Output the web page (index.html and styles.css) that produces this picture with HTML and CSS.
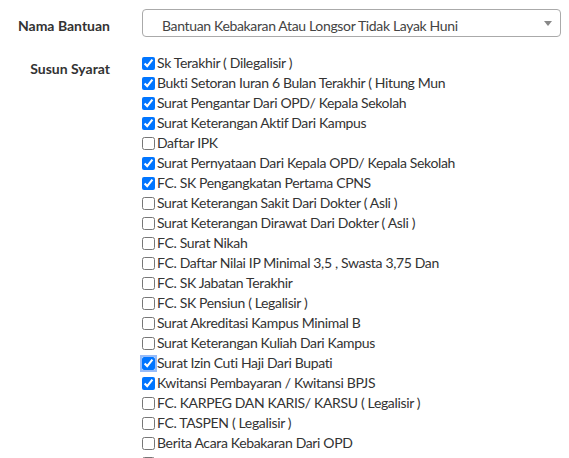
FILE: index.html
```html
<!DOCTYPE html>
<html lang="id">
<head>
<meta charset="utf-8">
<link rel="stylesheet" href="styles.css">
</head>
<body>
<form class="form">
  <div class="row row-select">
    <label class="label">Nama Bantuan</label>
    <div class="select">
      <span class="select-text">Bantuan Kebakaran Atau Longsor Tidak Layak Huni</span>
      <span class="select-arrow"></span>
    </div>
  </div>
  <div class="row row-checks">
    <label class="label label-checks">Susun Syarat</label>
    <div class="checks">
      <label class="check"><input type="checkbox" checked>Sk Terakhir ( Dilegalisir )</label>
      <label class="check"><input type="checkbox" checked>Bukti Setoran Iuran 6 Bulan Terakhir ( Hitung Mun</label>
      <label class="check"><input type="checkbox" checked>Surat Pengantar Dari OPD/ Kepala Sekolah</label>
      <label class="check"><input type="checkbox" checked>Surat Keterangan Aktif Dari Kampus</label>
      <label class="check"><input type="checkbox">Daftar IPK</label>
      <label class="check"><input type="checkbox" checked>Surat Pernyataan Dari Kepala OPD/ Kepala Sekolah</label>
      <label class="check"><input type="checkbox" checked>FC. SK Pengangkatan Pertama CPNS</label>
      <label class="check"><input type="checkbox">Surat Keterangan Sakit Dari Dokter ( Asli )</label>
      <label class="check"><input type="checkbox">Surat Keterangan Dirawat Dari Dokter ( Asli )</label>
      <label class="check"><input type="checkbox">FC. Surat Nikah</label>
      <label class="check"><input type="checkbox">FC. Daftar Nilai IP Minimal 3,5 , Swasta 3,75 Dan</label>
      <label class="check"><input type="checkbox">FC. SK Jabatan Terakhir</label>
      <label class="check"><input type="checkbox">FC. SK Pensiun ( Legalisir )</label>
      <label class="check"><input type="checkbox">Surat Akreditasi Kampus Minimal B</label>
      <label class="check"><input type="checkbox">Surat Keterangan Kuliah Dari Kampus</label>
      <label class="check"><input type="checkbox" class="focused" checked>Surat Izin Cuti Haji Dari Bupati</label>
      <label class="check"><input type="checkbox" checked>Kwitansi Pembayaran / Kwitansi BPJS</label>
      <label class="check"><input type="checkbox">FC. KARPEG DAN KARIS/ KARSU ( Legalisir )</label>
      <label class="check"><input type="checkbox">FC. TASPEN ( Legalisir )</label>
      <label class="check"><input type="checkbox">Berita Acara Kebakaran Dari OPD</label>
      <label class="check"><input type="checkbox">Laporan Kejadian Dari Lurah Setempat</label>
    </div>
  </div>
</form>
</body>
</html>
```

FILE: styles.css
```css
html, body {
  margin: 0;
  padding: 0;
  background: #fff;
}
body {
  font-family: "Lato", "Open Sans", sans-serif;
  font-size: 14px;
  letter-spacing: -0.35px;
  color: #333;
  overflow: hidden;
  height: 458px;
}
.form {
  padding: 9px 8px 0 0;
}
.row {
  display: grid;
  grid-template-columns: 110px 1fr;
  column-gap: 32px;
}
.row-checks {
  margin-top: 16px;
}
.label {
  text-align: right;
  font-weight: 700;
  letter-spacing: 0;
  color: #333;
  padding-top: 7px;
  line-height: 20px;
}
.label-checks {
  padding-top: 6px;
}
.select {
  position: relative;
  height: 28px;
  box-sizing: border-box;
  border: 1px solid #aaa;
  border-radius: 4px;
  padding: 6px 0 0 19px;
  line-height: 20px;
  color: #444;
}
.select-arrow {
  position: absolute;
  right: 8px;
  top: 11px;
  width: 0;
  height: 0;
  border-style: solid;
  border-width: 5px 4px 0 4px;
  border-color: #888 transparent transparent transparent;
}
.checks {
  display: flex;
  flex-direction: column;
}
.check {
  display: flex;
  align-items: center;
  height: 20px;
  line-height: 20px;
  white-space: nowrap;
  color: #333;
}
.check input {
  margin: 0 2px 0 0;
  width: 13px;
  height: 13px;
  flex: none;
}
.check input.focused {
  border-radius: 3px;
  box-shadow: 0 0 0 2px rgba(66, 133, 244, 0.55);
}
```
